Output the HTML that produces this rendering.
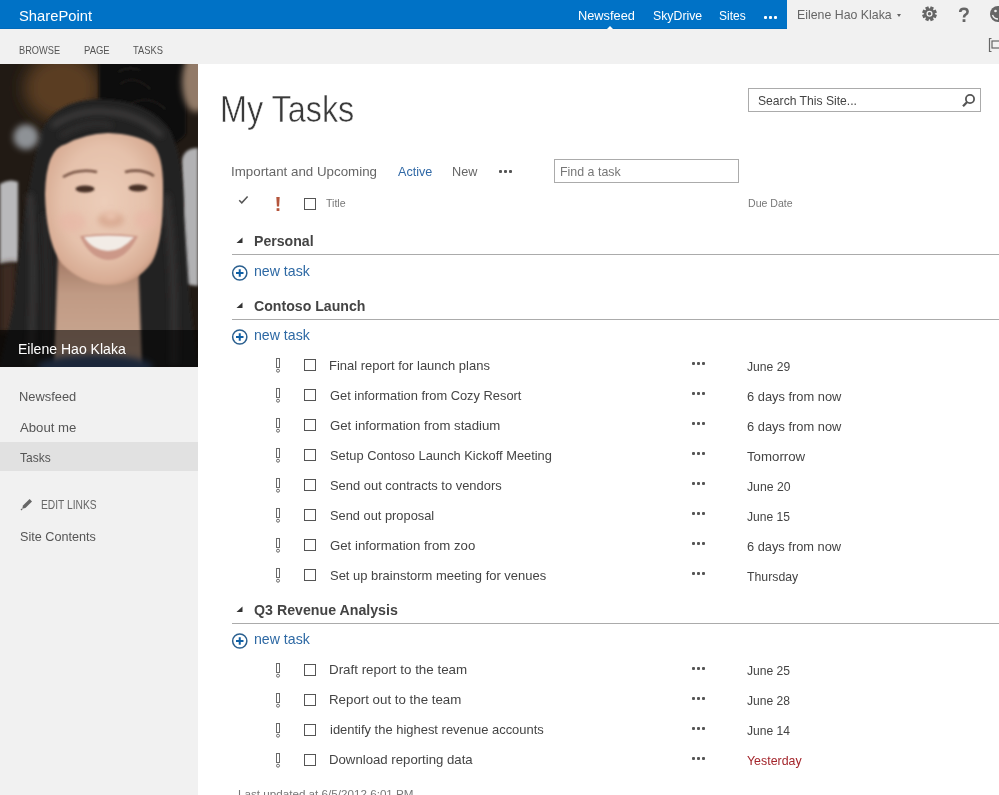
<!DOCTYPE html>
<html><head><meta charset="utf-8">
<style>
html,body{margin:0;padding:0;}
body{width:999px;height:795px;overflow:hidden;position:relative;background:#fff;font-family:"Liberation Sans",sans-serif;}
.t{position:absolute;white-space:nowrap;line-height:1;}
.bm{display:inline-block;width:0;height:0;vertical-align:baseline;}
#suite{position:absolute;left:0;top:0;width:787px;height:29px;background:#0072c6;box-shadow:inset 0 -1px 0 #006abb;}
#suiteR{position:absolute;left:787px;top:0;width:212px;height:29px;background:#f1f1f1;}
#ribbon{position:absolute;left:0;top:29px;width:999px;height:35px;background:#f1f1f1;}
#leftnav{position:absolute;left:0;top:64px;width:198px;height:731px;background:#f1f1f1;}
#photo{position:absolute;left:0;top:64px;width:198px;height:303px;overflow:hidden;background:#1a1512;}
.hl{position:absolute;left:0;top:442px;width:198px;height:29px;background:#e1e1e1;}
.cb{position:absolute;width:10px;height:10px;border:1px solid #555;}
.dots{position:absolute;width:13px;height:3px;}
.dots i{position:absolute;top:0;width:3px;height:3px;border-radius:1px;background:#555;}
.line{position:absolute;left:232px;width:767px;height:1px;background:#ababab;}
.tri{position:absolute;width:0;height:0;border-style:solid;}
</style></head>
<body>
<div id="suite"></div>
<div id="suiteR"></div>
<div id="ribbon"></div>
<div id="leftnav"></div>
<div class="hl"></div>
<div id="photo"><svg width="198" height="303" viewBox="0 0 198 303" style="position:absolute;left:0;top:0">
<defs>
<filter id="b1" filterUnits="userSpaceOnUse" x="-50" y="-50" width="300" height="400"><feGaussianBlur stdDeviation="8"/></filter>
<filter id="b2" filterUnits="userSpaceOnUse" x="-50" y="-50" width="300" height="400"><feGaussianBlur stdDeviation="3"/></filter>
<filter id="b3" filterUnits="userSpaceOnUse" x="-50" y="-50" width="300" height="400"><feGaussianBlur stdDeviation="1.5"/></filter>
<filter id="b4" filterUnits="userSpaceOnUse" x="-50" y="-50" width="300" height="400"><feGaussianBlur stdDeviation="0.9"/></filter>
<radialGradient id="skin" cx="0.5" cy="0.45" r="0.6">
<stop offset="0" stop-color="#eccdb9"/><stop offset="0.6" stop-color="#e5c1ab"/><stop offset="0.88" stop-color="#d8ac94"/><stop offset="1" stop-color="#b98c74"/>
</radialGradient>
<linearGradient id="neck" x1="0" y1="0" x2="0" y2="1">
<stop offset="0" stop-color="#9e7460"/><stop offset="0.35" stop-color="#c09a84"/><stop offset="1" stop-color="#ccaa94"/>
</linearGradient>
</defs>
<rect width="198" height="303" fill="#211a14"/>
<ellipse cx="62" cy="24" rx="38" ry="34" fill="#5a3e22" filter="url(#b1)"/>
<!-- other person's dark hair top-right -->
<path d="M99 -5 L186 -5 L186 70 Q170 90 140 80 L99 60 Z" fill="#0e0c0b" filter="url(#b3)"/>
<path d="M120 20 Q135 10 150 25 M130 40 Q150 30 165 45 M118 8 Q128 2 140 6" stroke="#2a2624" stroke-width="1.2" fill="none" filter="url(#b4)"/>
<ellipse cx="196" cy="18" rx="14" ry="30" fill="#927a68" filter="url(#b2)"/>
<!-- gray clothing -->
<path d="M0 120 Q9 114 18 118 L18 198 L0 200 Z" fill="#b9b9bb" filter="url(#b3)"/>
<path d="M198 84 Q184 84 182 96 L183 220 L198 222 Z" fill="#b2b2b4" filter="url(#b3)"/>
<path d="M0 200 L16 198 L15 268 L0 268 Z" fill="#3d2c22" filter="url(#b2)"/>
<!-- hair mass -->
<path d="M42 66 Q56 36 100 35 Q148 36 170 66 Q184 96 184 150 L190 240 L198 303 L134 303 L134 200 L60 200 L60 303 L0 303 L14 240 Q24 130 42 66 Z" fill="#242222" filter="url(#b3)"/>
<path d="M52 62 Q80 44 108 48 Q140 50 162 72" stroke="#4a4746" stroke-width="4" fill="none" filter="url(#b2)"/>
<path d="M60 72 Q90 54 112 62" stroke="#3e3b3a" stroke-width="3" fill="none" filter="url(#b2)"/>
<path d="M30 130 Q36 210 30 300" stroke="#3c3a3a" stroke-width="5" fill="none" filter="url(#b2)"/>
<path d="M44 150 Q48 220 46 290" stroke="#2e2c2c" stroke-width="4" fill="none" filter="url(#b2)"/>
<path d="M166 130 Q176 210 174 300" stroke="#393636" stroke-width="6" fill="none" filter="url(#b2)"/>
<!-- neck / chest -->
<path d="M58 190 L138 190 L142 303 L54 303 Z" fill="url(#neck)" filter="url(#b3)"/>
<!-- face -->
<path d="M45 130 Q46 84 66 80 Q84 70 108 69 Q136 70 152 80 Q164 90 163 130 Q163 178 152 198 Q136 221 108 221 Q82 220 62 200 Q46 178 45 130 Z" fill="url(#skin)" filter="url(#b4)"/>
<!-- cheeks -->
<ellipse cx="72" cy="158" rx="14" ry="10" fill="#e8b4a4" opacity="0.5" filter="url(#b2)"/>
<ellipse cx="146" cy="156" rx="12" ry="10" fill="#e8b4a4" opacity="0.5" filter="url(#b2)"/>
<!-- eyebrows -->
<path d="M63 113 Q78 104 97 108" stroke="#7a5646" stroke-width="2.6" fill="none" filter="url(#b4)"/>
<path d="M125 108 Q142 104 154 112" stroke="#7a5646" stroke-width="2.6" fill="none" filter="url(#b4)"/>
<!-- eyes -->
<ellipse cx="85" cy="125" rx="9.5" ry="3.4" fill="#4a3028" filter="url(#b4)"/>
<ellipse cx="138" cy="124" rx="9.5" ry="3.4" fill="#4a3028" filter="url(#b4)"/>
<!-- nose -->
<ellipse cx="111" cy="156" rx="13" ry="7" fill="#d8a890" filter="url(#b2)"/>
<ellipse cx="111" cy="152" rx="6" ry="4" fill="#eec8b4" filter="url(#b2)"/>
<!-- mouth -->
<path d="M80 172 Q108 168 138 172 Q126 196 108 196 Q90 195 80 172 Z" fill="#cc9888" filter="url(#b4)"/>
<path d="M84 173 Q108 170 134 173 Q122 187 108 187 Q92 186 84 173 Z" fill="#f2ece6" filter="url(#b4)"/>
<!-- bokeh -->
<circle cx="26" cy="73" r="12.5" fill="#8e9296" filter="url(#b2)"/>
<!-- blue clothing -->
<ellipse cx="95" cy="303" rx="58" ry="12" fill="#3c5680" filter="url(#b2)"/>
</svg>
</div>
<div style="position:absolute;left:0;top:330px;width:198px;height:37px;background:rgba(0,0,0,0.55);"></div>

<!-- suite bar dots + notch -->
<div class="dots" style="left:764px;top:16px;"><i style="left:0;background:#fff"></i><i style="left:5px;background:#fff"></i><i style="left:10px;background:#fff"></i></div>
<div class="tri" style="left:607px;top:26px;border-width:0 3.5px 3px 3.5px;border-color:transparent transparent #fff transparent;"></div>
<div class="tri" style="left:897px;top:14px;border-width:3px 2.5px 0 2.5px;border-color:#666 transparent transparent transparent;"></div>

<!-- search box -->
<div style="position:absolute;left:748px;top:88px;width:231px;height:22px;border:1px solid #ababab;background:#fff;"></div>
<!-- find box -->
<div style="position:absolute;left:554px;top:159px;width:183px;height:22px;border:1px solid #ababab;background:#fff;"></div>
<div class="dots" style="left:499px;top:170px;"><i style="left:0"></i><i style="left:5px"></i><i style="left:10px"></i></div>

<!-- header checkbox -->
<div class="cb" style="left:304px;top:198px;"></div>

<div class="line" style="top:254px;"></div>
<div class="line" style="top:319px;"></div>
<div class="line" style="top:623px;"></div>


<!-- header check + red ! -->
<svg style="position:absolute;left:238px;top:195px" width="11" height="10" viewBox="0 0 11 10"><path d="M1.2 5.2 L3.8 7.8 L9.6 1.6" stroke="#555" stroke-width="1.5" fill="none"/></svg>
<svg style="position:absolute;left:275px;top:196px" width="6" height="16" viewBox="0 0 6 16"><path d="M1.3 1 L4.7 1 L4.1 10.5 L1.9 10.5 Z" fill="#b4553c"/><rect x="1.6" y="12.2" width="2.8" height="2.8" fill="#b4553c"/></svg>
<!-- section triangles -->
<svg style="position:absolute;left:236px;top:237px" width="8" height="7" viewBox="0 0 8 7"><path d="M0.5 6 L6.5 0.5 L6.5 6 Z" fill="#333"/></svg>
<svg style="position:absolute;left:236px;top:302px" width="8" height="7" viewBox="0 0 8 7"><path d="M0.5 6 L6.5 0.5 L6.5 6 Z" fill="#333"/></svg>
<svg style="position:absolute;left:236px;top:606px" width="8" height="7" viewBox="0 0 8 7"><path d="M0.5 6 L6.5 0.5 L6.5 6 Z" fill="#333"/></svg>
<!-- plus circles -->
<svg style="position:absolute;left:231px;top:264px" width="18" height="18" viewBox="0 0 18 18"><circle cx="8.75" cy="9" r="7.1" stroke="#2a5f8f" stroke-width="1.5" fill="none"/><path d="M5 9 H12.5 M8.75 5.2 V12.8" stroke="#0f60a6" stroke-width="2" fill="none"/></svg>
<svg style="position:absolute;left:231px;top:328px" width="18" height="18" viewBox="0 0 18 18"><circle cx="8.75" cy="9" r="7.1" stroke="#2a5f8f" stroke-width="1.5" fill="none"/><path d="M5 9 H12.5 M8.75 5.2 V12.8" stroke="#0f60a6" stroke-width="2" fill="none"/></svg>
<svg style="position:absolute;left:231px;top:632px" width="18" height="18" viewBox="0 0 18 18"><circle cx="8.75" cy="9" r="7.1" stroke="#2a5f8f" stroke-width="1.5" fill="none"/><path d="M5 9 H12.5 M8.75 5.2 V12.8" stroke="#0f60a6" stroke-width="2" fill="none"/></svg>
<!-- magnifier -->
<svg style="position:absolute;left:960px;top:92px" width="18" height="18" viewBox="0 0 18 18"><circle cx="10" cy="7" r="4.1" stroke="#555" stroke-width="1.8" fill="none"/><path d="M7.2 10 L3 14.2" stroke="#555" stroke-width="2.3" fill="none"/></svg>
<!-- gear -->
<svg style="position:absolute;left:920px;top:4px" width="19" height="19" viewBox="0 0 19 19"><g transform="translate(9.5,9.8) rotate(22.5)" fill="#666"><circle r="5.4"/><rect x="-1.7" y="-7.4" width="3.4" height="14.8"/><rect x="-1.7" y="-7.4" width="3.4" height="14.8" transform="rotate(45)"/><rect x="-1.7" y="-7.4" width="3.4" height="14.8" transform="rotate(90)"/><rect x="-1.7" y="-7.4" width="3.4" height="14.8" transform="rotate(135)"/></g><circle cx="9.5" cy="9.8" r="2.4" fill="none" stroke="#f1f1f1" stroke-width="1.3"/></svg>
<!-- question -->
<svg style="position:absolute;left:957px;top:6px" width="14" height="18" viewBox="0 0 14 18"><path d="M3.2 6 Q3.2 2.8 7 2.8 Q10.6 2.8 10.6 5.8 Q10.6 7.6 8.6 8.6 Q7 9.4 7 11.4" stroke="#666" stroke-width="2.6" fill="none"/><rect x="5.6" y="13.2" width="2.8" height="2.8" fill="#666"/></svg>
<!-- smiley (cut off) -->
<svg style="position:absolute;left:989px;top:5px" width="18" height="18" viewBox="0 0 18 18"><circle cx="9" cy="9" r="8" fill="#666"/><circle cx="6.5" cy="6" r="1.3" fill="#f1f1f1"/><path d="M3.5 10 Q5 14 9 14" stroke="#f1f1f1" stroke-width="1.4" fill="none"/></svg>
<!-- focus icon -->
<svg style="position:absolute;left:988px;top:37px" width="12" height="16" viewBox="0 0 12 16"><path d="M3.5 1.5 H1.5 V14.5 H3.5" stroke="#666" stroke-width="1.2" fill="none"/><rect x="4" y="4" width="9" height="7" stroke="#666" stroke-width="1.2" fill="none"/></svg>
<!-- pencil -->
<svg style="position:absolute;left:20px;top:497px" width="14" height="14" viewBox="0 0 14 14"><path d="M2.2 11.8 L3 8.6 L9.6 2 L12 4.4 L5.4 11 Z" fill="#666"/><path d="M1 13 L2.2 11.8" stroke="#666" stroke-width="1.2"/></svg>

<svg style="position:absolute;left:276px;top:358px" width="6" height="16" viewBox="0 0 6 16"><rect x="0.5" y="0.5" width="3" height="9" fill="none" stroke="#6a6a6a" stroke-width="1"/><circle cx="2" cy="12.7" r="1.5" fill="none" stroke="#6a6a6a" stroke-width="1"/></svg>
<div class="cb" style="left:304px;top:359px;"></div>
<div class="dots" style="left:692px;top:362px;"><i style="left:0"></i><i style="left:5px"></i><i style="left:10px"></i></div>
<svg style="position:absolute;left:276px;top:388px" width="6" height="16" viewBox="0 0 6 16"><rect x="0.5" y="0.5" width="3" height="9" fill="none" stroke="#6a6a6a" stroke-width="1"/><circle cx="2" cy="12.7" r="1.5" fill="none" stroke="#6a6a6a" stroke-width="1"/></svg>
<div class="cb" style="left:304px;top:389px;"></div>
<div class="dots" style="left:692px;top:392px;"><i style="left:0"></i><i style="left:5px"></i><i style="left:10px"></i></div>
<svg style="position:absolute;left:276px;top:418px" width="6" height="16" viewBox="0 0 6 16"><rect x="0.5" y="0.5" width="3" height="9" fill="none" stroke="#6a6a6a" stroke-width="1"/><circle cx="2" cy="12.7" r="1.5" fill="none" stroke="#6a6a6a" stroke-width="1"/></svg>
<div class="cb" style="left:304px;top:419px;"></div>
<div class="dots" style="left:692px;top:422px;"><i style="left:0"></i><i style="left:5px"></i><i style="left:10px"></i></div>
<svg style="position:absolute;left:276px;top:448px" width="6" height="16" viewBox="0 0 6 16"><rect x="0.5" y="0.5" width="3" height="9" fill="none" stroke="#6a6a6a" stroke-width="1"/><circle cx="2" cy="12.7" r="1.5" fill="none" stroke="#6a6a6a" stroke-width="1"/></svg>
<div class="cb" style="left:304px;top:449px;"></div>
<div class="dots" style="left:692px;top:452px;"><i style="left:0"></i><i style="left:5px"></i><i style="left:10px"></i></div>
<svg style="position:absolute;left:276px;top:478px" width="6" height="16" viewBox="0 0 6 16"><rect x="0.5" y="0.5" width="3" height="9" fill="none" stroke="#6a6a6a" stroke-width="1"/><circle cx="2" cy="12.7" r="1.5" fill="none" stroke="#6a6a6a" stroke-width="1"/></svg>
<div class="cb" style="left:304px;top:479px;"></div>
<div class="dots" style="left:692px;top:482px;"><i style="left:0"></i><i style="left:5px"></i><i style="left:10px"></i></div>
<svg style="position:absolute;left:276px;top:508px" width="6" height="16" viewBox="0 0 6 16"><rect x="0.5" y="0.5" width="3" height="9" fill="none" stroke="#6a6a6a" stroke-width="1"/><circle cx="2" cy="12.7" r="1.5" fill="none" stroke="#6a6a6a" stroke-width="1"/></svg>
<div class="cb" style="left:304px;top:509px;"></div>
<div class="dots" style="left:692px;top:512px;"><i style="left:0"></i><i style="left:5px"></i><i style="left:10px"></i></div>
<svg style="position:absolute;left:276px;top:538px" width="6" height="16" viewBox="0 0 6 16"><rect x="0.5" y="0.5" width="3" height="9" fill="none" stroke="#6a6a6a" stroke-width="1"/><circle cx="2" cy="12.7" r="1.5" fill="none" stroke="#6a6a6a" stroke-width="1"/></svg>
<div class="cb" style="left:304px;top:539px;"></div>
<div class="dots" style="left:692px;top:542px;"><i style="left:0"></i><i style="left:5px"></i><i style="left:10px"></i></div>
<svg style="position:absolute;left:276px;top:568px" width="6" height="16" viewBox="0 0 6 16"><rect x="0.5" y="0.5" width="3" height="9" fill="none" stroke="#6a6a6a" stroke-width="1"/><circle cx="2" cy="12.7" r="1.5" fill="none" stroke="#6a6a6a" stroke-width="1"/></svg>
<div class="cb" style="left:304px;top:569px;"></div>
<div class="dots" style="left:692px;top:572px;"><i style="left:0"></i><i style="left:5px"></i><i style="left:10px"></i></div>
<svg style="position:absolute;left:276px;top:663px" width="6" height="16" viewBox="0 0 6 16"><rect x="0.5" y="0.5" width="3" height="9" fill="none" stroke="#6a6a6a" stroke-width="1"/><circle cx="2" cy="12.7" r="1.5" fill="none" stroke="#6a6a6a" stroke-width="1"/></svg>
<div class="cb" style="left:304px;top:664px;"></div>
<div class="dots" style="left:692px;top:667px;"><i style="left:0"></i><i style="left:5px"></i><i style="left:10px"></i></div>
<svg style="position:absolute;left:276px;top:693px" width="6" height="16" viewBox="0 0 6 16"><rect x="0.5" y="0.5" width="3" height="9" fill="none" stroke="#6a6a6a" stroke-width="1"/><circle cx="2" cy="12.7" r="1.5" fill="none" stroke="#6a6a6a" stroke-width="1"/></svg>
<div class="cb" style="left:304px;top:694px;"></div>
<div class="dots" style="left:692px;top:697px;"><i style="left:0"></i><i style="left:5px"></i><i style="left:10px"></i></div>
<svg style="position:absolute;left:276px;top:723px" width="6" height="16" viewBox="0 0 6 16"><rect x="0.5" y="0.5" width="3" height="9" fill="none" stroke="#6a6a6a" stroke-width="1"/><circle cx="2" cy="12.7" r="1.5" fill="none" stroke="#6a6a6a" stroke-width="1"/></svg>
<div class="cb" style="left:304px;top:724px;"></div>
<div class="dots" style="left:692px;top:727px;"><i style="left:0"></i><i style="left:5px"></i><i style="left:10px"></i></div>
<svg style="position:absolute;left:276px;top:753px" width="6" height="16" viewBox="0 0 6 16"><rect x="0.5" y="0.5" width="3" height="9" fill="none" stroke="#6a6a6a" stroke-width="1"/><circle cx="2" cy="12.7" r="1.5" fill="none" stroke="#6a6a6a" stroke-width="1"/></svg>
<div class="cb" style="left:304px;top:754px;"></div>
<div class="dots" style="left:692px;top:757px;"><i style="left:0"></i><i style="left:5px"></i><i style="left:10px"></i></div>
<div class="t" id="t0" style="left:18.60px;top:8.00px;font-size:15px;color:#fff;transform:scaleX(0.9847);transform-origin:0 0;">SharePoint<span class="bm"></span></div>
<div class="t" id="t1" style="left:577.78px;top:10.00px;font-size:12.6px;color:#fff;transform:scaleX(1.0164);transform-origin:0 0;">Newsfeed<span class="bm"></span></div>
<div class="t" id="t2" style="left:652.50px;top:10.00px;font-size:12.6px;color:#fff;transform:scaleX(0.9766);transform-origin:0 0;">SkyDrive<span class="bm"></span></div>
<div class="t" id="t3" style="left:718.60px;top:10.00px;font-size:12.6px;color:#fff;transform:scaleX(0.9530);transform-origin:0 0;">Sites<span class="bm"></span></div>
<div class="t" id="t4" style="left:797.22px;top:9.00px;font-size:12.6px;color:#666;transform:scaleX(0.9800);transform-origin:0 0;">Eilene Hao Klaka<span class="bm"></span></div>
<div class="t" id="t5" style="left:18.70px;top:45.00px;font-size:11px;color:#555;transform:scaleX(0.8403);transform-origin:0 0;">BROWSE<span class="bm"></span></div>
<div class="t" id="t6" style="left:83.60px;top:45.00px;font-size:11px;color:#555;transform:scaleX(0.8635);transform-origin:0 0;">PAGE<span class="bm"></span></div>
<div class="t" id="t7" style="left:133.00px;top:45.00px;font-size:11px;color:#555;transform:scaleX(0.8507);transform-origin:0 0;">TASKS<span class="bm"></span></div>
<div class="t" id="t8" style="left:17.86px;top:341.00px;font-size:15px;color:#fff;transform:scaleX(0.9361);transform-origin:0 0;">Eilene Hao Klaka<span class="bm"></span></div>
<div class="t" id="t9" style="left:18.65px;top:390.00px;font-size:13.5px;color:#555;transform:scaleX(0.9535);transform-origin:0 0;">Newsfeed<span class="bm"></span></div>
<div class="t" id="t10" style="left:19.60px;top:421.00px;font-size:13.5px;color:#555;transform:scaleX(0.9760);transform-origin:0 0;">About me<span class="bm"></span></div>
<div class="t" id="t11" style="left:19.60px;top:451.00px;font-size:13.5px;color:#555;transform:scaleX(0.8890);transform-origin:0 0;">Tasks<span class="bm"></span></div>
<div class="t" id="t12" style="left:40.80px;top:499.00px;font-size:12px;color:#666;transform:scaleX(0.8539);transform-origin:0 0;">EDIT LINKS<span class="bm"></span></div>
<div class="t" id="t13" style="left:19.50px;top:531.00px;font-size:12.8px;color:#555;transform:scaleX(0.9879);transform-origin:0 0;">Site Contents<span class="bm"></span></div>
<div class="t" id="t14" style="left:220.20px;top:92.00px;font-size:36px;color:#3a3a3a;transform:scaleX(0.8992);transform-origin:0 0;-webkit-text-stroke:0.5px #fff;">My Tasks<span class="bm"></span></div>
<div class="t" id="t15" style="left:758.30px;top:95.00px;font-size:12.6px;color:#444;transform:scaleX(0.9640);transform-origin:0 0;">Search This Site...<span class="bm"></span></div>
<div class="t" id="t16" style="left:231.16px;top:166.00px;font-size:12.8px;color:#666;transform:scaleX(1.0416);transform-origin:0 0;">Important and Upcoming<span class="bm"></span></div>
<div class="t" id="t17" style="left:397.80px;top:166.00px;font-size:12.8px;color:#3169a6;transform:scaleX(0.9847);transform-origin:0 0;">Active<span class="bm"></span></div>
<div class="t" id="t18" style="left:451.91px;top:166.00px;font-size:12.8px;color:#666;transform:scaleX(0.9898);transform-origin:0 0;">New<span class="bm"></span></div>
<div class="t" id="t19" style="left:560.03px;top:166.00px;font-size:12.8px;color:#777;transform:scaleX(0.9696);transform-origin:0 0;">Find a task<span class="bm"></span></div>
<div class="t" id="t20" style="left:326.30px;top:198.00px;font-size:11px;color:#777;transform:scaleX(0.9627);transform-origin:0 0;">Title<span class="bm"></span></div>
<div class="t" id="t21" style="left:748.40px;top:198.00px;font-size:11px;color:#777;transform:scaleX(0.9600);transform-origin:0 0;">Due Date<span class="bm"></span></div>
<div class="t" id="t22" style="left:253.80px;top:234.00px;font-size:14px;color:#444;font-weight:700;transform:scaleX(1.0078);transform-origin:0 0;">Personal<span class="bm"></span></div>
<div class="t" id="t23" style="left:253.80px;top:264.00px;font-size:14.2px;color:#2e69a4;transform:scaleX(0.9966);transform-origin:0 0;">new task<span class="bm"></span></div>
<div class="t" id="t24" style="left:253.60px;top:299.00px;font-size:14px;color:#444;font-weight:700;transform:scaleX(1.0093);transform-origin:0 0;">Contoso Launch<span class="bm"></span></div>
<div class="t" id="t25" style="left:253.80px;top:328.00px;font-size:14.2px;color:#2e69a4;transform:scaleX(0.9966);transform-origin:0 0;">new task<span class="bm"></span></div>
<div class="t" id="t26" style="left:253.60px;top:603.00px;font-size:14px;color:#444;font-weight:700;transform:scaleX(1.0139);transform-origin:0 0;">Q3 Revenue Analysis<span class="bm"></span></div>
<div class="t" id="t27" style="left:253.80px;top:632.00px;font-size:14.2px;color:#2e69a4;transform:scaleX(0.9966);transform-origin:0 0;">new task<span class="bm"></span></div>
<div class="t" id="t28" style="left:328.70px;top:360.00px;font-size:12.95px;color:#444;transform:scaleX(1.0032);transform-origin:0 0;">Final report for launch plans<span class="bm"></span></div>
<div class="t" id="t29" style="left:747.20px;top:361.00px;font-size:12.95px;color:#444;transform:scaleX(0.9380);transform-origin:0 0;">June 29<span class="bm"></span></div>
<div class="t" id="t30" style="left:329.70px;top:390.00px;font-size:12.95px;color:#444;transform:scaleX(0.9933);transform-origin:0 0;">Get information from Cozy Resort<span class="bm"></span></div>
<div class="t" id="t31" style="left:747.20px;top:391.00px;font-size:12.95px;color:#444;transform:scaleX(0.9940);transform-origin:0 0;">6 days from now<span class="bm"></span></div>
<div class="t" id="t32" style="left:329.70px;top:420.00px;font-size:12.95px;color:#444;transform:scaleX(1.0209);transform-origin:0 0;">Get information from stadium<span class="bm"></span></div>
<div class="t" id="t33" style="left:747.20px;top:421.00px;font-size:12.95px;color:#444;transform:scaleX(0.9940);transform-origin:0 0;">6 days from now<span class="bm"></span></div>
<div class="t" id="t34" style="left:329.70px;top:450.00px;font-size:12.95px;color:#444;transform:scaleX(0.9931);transform-origin:0 0;">Setup Contoso Launch Kickoff Meeting<span class="bm"></span></div>
<div class="t" id="t35" style="left:747.20px;top:451.00px;font-size:12.95px;color:#444;transform:scaleX(1.0236);transform-origin:0 0;">Tomorrow<span class="bm"></span></div>
<div class="t" id="t36" style="left:329.70px;top:480.00px;font-size:12.95px;color:#444;transform:scaleX(0.9987);transform-origin:0 0;">Send out contracts to vendors<span class="bm"></span></div>
<div class="t" id="t37" style="left:747.20px;top:481.00px;font-size:12.95px;color:#444;transform:scaleX(0.9467);transform-origin:0 0;">June 20<span class="bm"></span></div>
<div class="t" id="t38" style="left:329.70px;top:510.00px;font-size:12.95px;color:#444;transform:scaleX(0.9920);transform-origin:0 0;">Send out proposal<span class="bm"></span></div>
<div class="t" id="t39" style="left:747.20px;top:511.00px;font-size:12.95px;color:#444;transform:scaleX(0.9336);transform-origin:0 0;">June 15<span class="bm"></span></div>
<div class="t" id="t40" style="left:329.70px;top:540.00px;font-size:12.95px;color:#444;transform:scaleX(1.0206);transform-origin:0 0;">Get information from zoo<span class="bm"></span></div>
<div class="t" id="t41" style="left:747.20px;top:541.00px;font-size:12.95px;color:#444;transform:scaleX(0.9909);transform-origin:0 0;">6 days from now<span class="bm"></span></div>
<div class="t" id="t42" style="left:329.70px;top:570.00px;font-size:12.95px;color:#444;transform:scaleX(1.0020);transform-origin:0 0;">Set up brainstorm meeting for venues<span class="bm"></span></div>
<div class="t" id="t43" style="left:747.20px;top:571.00px;font-size:12.95px;color:#444;transform:scaleX(0.9493);transform-origin:0 0;">Thursday<span class="bm"></span></div>
<div class="t" id="t44" style="left:328.67px;top:664.00px;font-size:12.95px;color:#444;transform:scaleX(1.0328);transform-origin:0 0;">Draft report to the team<span class="bm"></span></div>
<div class="t" id="t45" style="left:747.20px;top:665.00px;font-size:12.95px;color:#444;transform:scaleX(0.9358);transform-origin:0 0;">June 25<span class="bm"></span></div>
<div class="t" id="t46" style="left:328.67px;top:694.00px;font-size:12.95px;color:#444;transform:scaleX(1.0279);transform-origin:0 0;">Report out to the team<span class="bm"></span></div>
<div class="t" id="t47" style="left:747.20px;top:695.00px;font-size:12.95px;color:#444;transform:scaleX(0.9336);transform-origin:0 0;">June 28<span class="bm"></span></div>
<div class="t" id="t48" style="left:329.70px;top:724.00px;font-size:12.95px;color:#444;transform:scaleX(1.0008);transform-origin:0 0;">identify the highest revenue accounts<span class="bm"></span></div>
<div class="t" id="t49" style="left:747.20px;top:725.00px;font-size:12.95px;color:#444;transform:scaleX(0.9336);transform-origin:0 0;">June 14<span class="bm"></span></div>
<div class="t" id="t50" style="left:328.68px;top:754.00px;font-size:12.95px;color:#444;transform:scaleX(1.0194);transform-origin:0 0;">Download reporting data<span class="bm"></span></div>
<div class="t" id="t51" style="left:747.20px;top:755.00px;font-size:12.95px;color:#a4262c;transform:scaleX(0.9567);transform-origin:0 0;">Yesterday<span class="bm"></span></div>
<div class="t" id="t52" style="left:237.60px;top:788.00px;font-size:11.6px;color:#777;transform:scaleX(1.0050);transform-origin:0 0;">Last updated at 6/5/2012 6:01 PM<span class="bm"></span></div>
</body></html>
